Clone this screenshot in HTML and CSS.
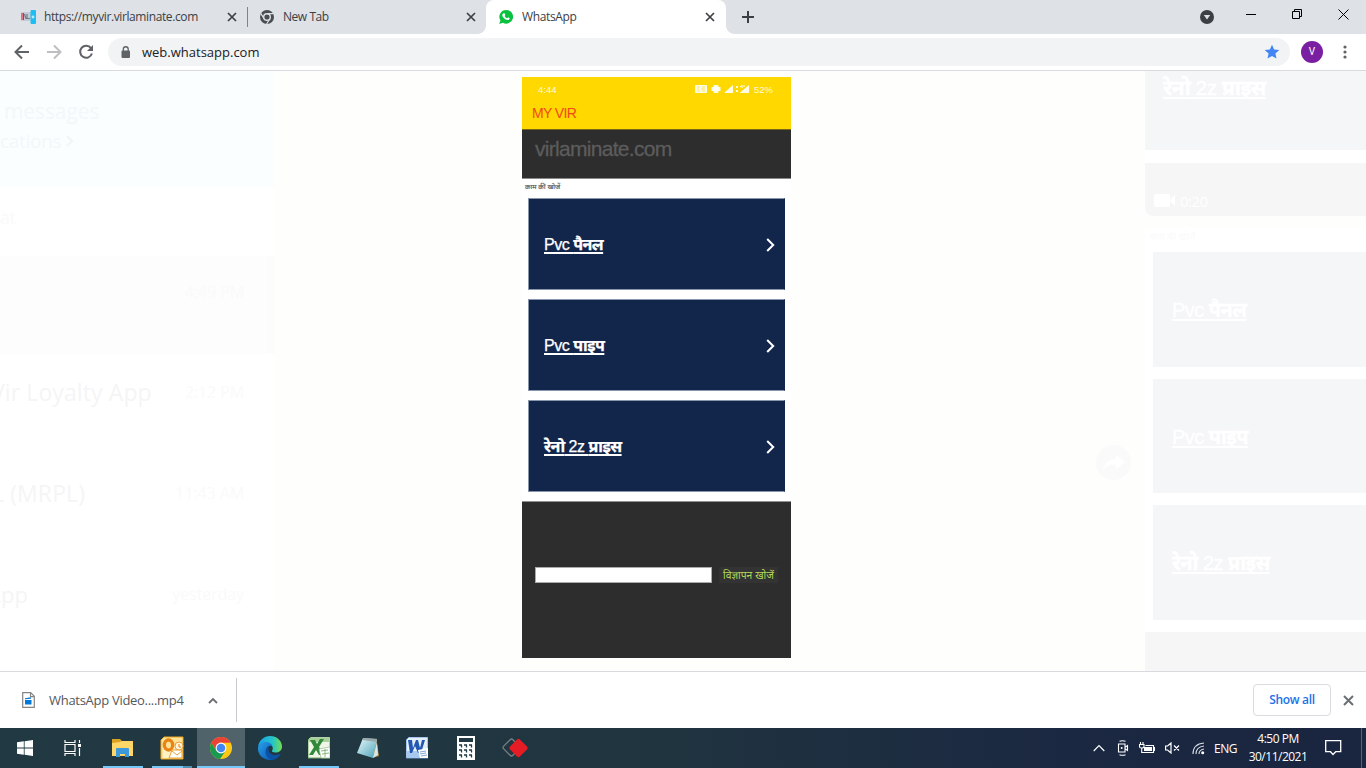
FILE: index.html
```html
<!DOCTYPE html>
<html lang="en">
<head>
<meta charset="utf-8">
<title>WhatsApp</title>
<link rel="stylesheet" href="styles.css">
</head>
<body>
<div class="desktop">
  <header class="tabs">
    <div class="tab first">
      <svg class="fav" width="16" height="16" viewBox="0 0 16 16"><rect y="3" width="10" height="9" fill="#c3cad3"/><path d="M3.500 5l1.500 5M6 5v4.500h3" stroke="#77788a" stroke-width="1.200" fill="none"/><path d="M1 4v7" stroke="#e35867" stroke-width="1.500"/><path d="M2.500 4v7" stroke="#4b5f9c"/><rect x="9.500" y="1" width="5.500" height="14" rx="1" fill="#20bdf2"/><circle cx="12" cy="8" r="1.400" fill="#b5edff"/></svg>
      <span class="label url">https://myvir.virlaminate.com</span>
      <svg class="close" width="10" height="10" viewBox="0 0 10 10"><path d="M1 1l8 8M9 1l-8 8"/></svg>
    </div>
    <div class="tab second">
      <svg class="fav" width="16" height="16" viewBox="0 0 16 16"><circle cx="8" cy="8" r="7" fill="#4a4d51"/><circle cx="8" cy="8" r="3.300" fill="#4a4d51" stroke="#dee1e6" stroke-width="1.400"/><path d="M8 4.700h6.400M5.100 9.700L1.800 4.400M10.900 9.700L7.600 15" stroke="#dee1e6" stroke-width="1.200"/></svg>
      <span class="label newtab">New Tab</span>
      <svg class="close" width="10" height="10" viewBox="0 0 10 10"><path d="M1 1l8 8M9 1l-8 8"/></svg>
    </div>
    <div class="tab active">
      <svg class="fav" width="16" height="16" viewBox="0 0 16 16"><path d="M8.200 1a6.800 6.800 0 1 1-3.300 12.700L1.200 15l1.200-3.600A6.800 6.800 0 0 1 8.200 1z" fill="#0ac23f"/><path d="M5.700 4.200l.9.100.7 1.700-.7.900c.6 1.100 1.400 1.800 2.600 2.300l.9-.9 1.700.9c.1 1-.8 1.800-2 1.800-3 0-5.800-3.200-5.500-5.200.2-.9.800-1.500 1.400-1.600z" fill="#fff"/></svg>
      <span class="label wa">WhatsApp</span>
      <svg class="close" width="10" height="10" viewBox="0 0 10 10"><path d="M1 1l8 8M9 1l-8 8"/></svg>
    </div>
    <svg class="plus" width="12" height="12" viewBox="0 0 12 12"><path d="M6 0v12M0 6h12" stroke="#3c4043" stroke-width="2"/></svg>
    <div class="winctl">
      <svg width="14" height="14" viewBox="0 0 14 14"><circle cx="7" cy="7" r="7" fill="#3c4043"/><path d="M3.800 5h6.400L7 9.600z" fill="#dee1e6"/></svg>
      <svg width="10" height="10" viewBox="0 0 10 10"><path d="M0 4.500h10" stroke="#000"/></svg>
      <svg width="11" height="11" viewBox="0 0 11 11"><path d="M.5 2.500h7v7h-7zM2.500 2.500v-2h7v7h-2" fill="none" stroke="#000"/></svg>
      <svg width="11" height="11" viewBox="0 0 11 11"><path d="M.5.500l10 10M10.500.500l-10 10" stroke="#000"/></svg>
    </div>
  </header>
  <nav class="toolbar">
    <svg class="back" width="16" height="16" viewBox="0 0 16 16"><path d="M15 8H2M8 1.500L1.500 8 8 14.500" fill="none" stroke="#5f6368" stroke-width="2"/></svg>
    <svg class="fwd" width="16" height="16" viewBox="0 0 16 16"><path d="M1 8h13M8 1.500L14.500 8 8 14.500" fill="none" stroke="#bdbfc2" stroke-width="2"/></svg>
    <svg class="reload" width="16" height="16" viewBox="0 0 16 16"><path d="M13 4.200A6 6 0 1 0 13.900 9.500" fill="none" stroke="#5f6368" stroke-width="2"/><path d="M15 1v6H9z" fill="#5f6368"/></svg>
    <div class="omnibox">
      <svg class="lock" width="10" height="13" viewBox="0 0 10 13"><rect x=".5" y="4.500" width="8.500" height="7.500" rx="1" fill="#5f6368"/><path d="M2.300 5V3.200a2.400 2.400 0 0 1 4.900 0V5" fill="none" stroke="#5f6368" stroke-width="1.300"/></svg>
      <span class="address">web.whatsapp.com</span>
      <svg class="star" width="16" height="16" viewBox="0 0 16 16"><path d="M8 .8l2.100 4.700 5.200.5-3.900 3.500 1.100 5.100L8 12l-4.500 2.600 1.100-5.100L.700 6l5.200-.5z" fill="#4285f4"/></svg>
    </div>
    <div class="avatar">V</div>
    <svg class="more" width="4" height="14" viewBox="0 0 4 14"><circle cx="2" cy="2" r="1.600"/><circle cx="2" cy="7" r="1.600"/><circle cx="2" cy="12" r="1.600"/></svg>
  </nav>
  <main class="page">
    <aside class="chats">
      <div class="notice">
        <div class="nt1">messages</div>
        <div class="nt2">cations <svg width="8" height="12" viewBox="0 0 8 12"><path d="M1 1l5 5-5 5" fill="none" stroke="#f3f6f8" stroke-width="2.400"/></svg></div>
      </div>
      <div class="search">at</div>
      <div class="chat selected"><span></span><time>4:49 PM</time></div>
      <div class="chat"><span class="n1">Vir Loyalty App</span><time>2:12 PM</time></div>
      <div class="chat"><span class="n2">L (MRPL)</span><time>11:43 AM</time></div>
      <div class="chat"><span class="n3">App</span><time>yesterday</time></div>
    </aside>
    <section class="viewer">
      <div class="phone">
        <div class="appbar">
          <div class="status"><span>4:44</span>
            <svg width="56" height="10" viewBox="0 0 56 10"><g fill="#fff" fill-opacity=".9"><rect x="1" y="1" width="12" height="8" rx="1"/><path d="M30 9l9-8v8zM45.500 9L55 1v8z"/><rect x="19.500" y="1" width="5" height="8" rx="1"/><path d="M17.500 3h9v4h-9zM42 2h2v2h-2zM42 6h2v2h-2z"/></g><path d="M3 3h3M8 3h3M3 5h2M7 5h4M3 7h3M8 7h3" stroke="#ffd800" stroke-width=".6"/><path d="M46 3l2-2v3M49 2h2" stroke="#fff" fill="none"/></svg>
            <span>52%</span></div>
          <div class="apptitle">MY VIR</div>
        </div>
        <div class="site">virlaminate.com</div>
        <div class="caption">काम की खोजें</div>
        <div class="cards">
          <a class="card"><span>Pvc <b>पैनल</b></span><svg width="9" height="14" viewBox="0 0 9 14"><path d="M1.200 1l6 6-6 6"/></svg></a>
          <a class="card"><span>Pvc <b>पाइप</b></span><svg width="9" height="14" viewBox="0 0 9 14"><path d="M1.200 1l6 6-6 6"/></svg></a>
          <a class="card"><span><b>रेनो</b> 2z <b>प्राइस</b></span><svg width="9" height="14" viewBox="0 0 9 14"><path d="M1.200 1l6 6-6 6"/></svg></a>
        </div>
        <div class="finder"><div class="field"></div><div class="findbtn">विज्ञापन खोजें</div></div>
      </div>
      <div class="forward"><svg width="24" height="18" viewBox="0 0 24 18"><path d="M14 1l9 7-9 7v-4C7 10 4 12 1 17c1-7 5-12 13-12z" fill="#fff"/></svg></div>
    </section>
    <aside class="thumbs">
      <div class="ghost top"><span><b>रेनो</b> 2z <b>प्राइस</b></span></div>
      <div class="duration"><svg width="22" height="14" viewBox="0 0 22 14"><rect y="0" width="16" height="13" rx="2"/><path d="M16 6l5-5v11l-5-5z"/></svg>0:20</div>
      <div class="next">
        <div class="tinycap">काम की खोजें</div>
        <div class="ghost"><span>Pvc <b>पैनल</b></span></div>
        <div class="ghost"><span>Pvc <b>पाइप</b></span></div>
        <div class="ghost"><span><b>रेनो</b> 2z <b>प्राइस</b></span></div>
        <div class="foot"></div>
      </div>
    </aside>
  </main>
  <footer class="downloads">
    <svg class="file" width="13" height="16" viewBox="0 0 13 16"><path d="M.7.700h8l3.600 3.600v11H.700zM8.500.700v4h4" fill="#fff" stroke="#858585" stroke-width="1.200"/><path d="M3 8h6.500v4.500H3zM3 6.300l6-1v1.500L3 7.300z" fill="#0078d7"/></svg>
    <span class="filename">WhatsApp Video....mp4</span>
    <svg class="chev" width="10" height="7" viewBox="0 0 10 7"><path d="M1 6l4-4 4 4" fill="none" stroke="#6b6f73" stroke-width="1.800"/></svg>
    <span class="sep"></span>
    <button class="showall">Show all</button>
    <svg class="dclose" width="11" height="11" viewBox="0 0 11 11"><path d="M1 1l9 9M10 1l-9 9" stroke="#6b6f73" stroke-width="2"/></svg>
  </footer>
  <div class="taskbar">
    <div class="task"><svg width="16" height="16" viewBox="0 0 16 16"><path d="M0 2.300l6.800-1v6.300H0zM7.600 1.200L16 0v7.600H7.600zM0 8.400h6.800v6.300L0 13.800zM7.600 8.400H16V16l-8.400-1.200z" fill="#fff"/></svg></div>
    <div class="task"><svg width="18" height="16" viewBox="0 0 18 16"><path d="M1 0v2.500h10V0M1 16v-2.500h10V16M1 4.500h10v7H1zM15.500 0v3M15.500 8v8" fill="none" stroke="#fff" stroke-width="1.200"/><path d="M14 4h3v3h-3z" fill="#fff"/></svg></div>
    <div class="task open"><svg width="24" height="20" viewBox="0 0 24 20"><path d="M1 1h8l2 2h11v5H1z" fill="#dca11e"/><path d="M1 5l8-1 2-1h11v15H1z" fill="#ffd667"/><path d="M5 19v-8q0-1 1-1h11q1 0 1 1v8h-4v-3H9v3z" fill="#3c99dc"/></svg></div>
    <div class="task open multi"><svg width="24" height="24" viewBox="0 0 24 24"><path d="M4 1h19v22H1V4z" fill="#ffe295" stroke="#eda51d"/><path d="M3 14l18-6v14H3z" fill="#fff2c3"/><ellipse cx="8.500" cy="9" rx="4.200" ry="5" fill="none" stroke="#e88316" stroke-width="3.300"/><path d="M12 14h10v8H9z" fill="#fff" stroke="#e9a13a"/><path d="M12 15l5 4 5-4" fill="none" stroke="#e9a13a"/><circle cx="19" cy="10" r="4" fill="#fff5da" stroke="#eba03d"/><path d="M19 8v3h2" fill="none" stroke="#e88316"/></svg></div>
    <div class="task open current"><svg width="24" height="24" viewBox="0 0 24 24"><circle cx="12" cy="12" r="11" fill="#fbc915"/><path d="M2.300 6.800A11 11 0 0 1 21.700 6.800H12L7.500 14.600z" fill="#ea4335"/><path d="M2.300 6.800A11 11 0 0 0 11 23l5.500-8.300-4.500 2-4.500-2z" fill="#189b50"/><circle cx="12" cy="12" r="5.400" fill="#fff"/><circle cx="12" cy="12" r="4.300" fill="#4285f4"/></svg></div>
    <div class="task"><svg width="24" height="24" viewBox="0 0 24 24"><defs><linearGradient id="edgeTop"><stop stop-color="#199eea"/><stop offset=".6" stop-color="#24c5c9"/><stop offset="1" stop-color="#75dc50"/></linearGradient><linearGradient id="edgeLow" x2="1" y2="1"><stop stop-color="#2ba0e8"/><stop offset="1" stop-color="#0755b5"/></linearGradient></defs><path d="M0 11C1 4 6 0 12 0c7 0 12 5 12 10.500 0 4-3 6-6.500 6-2.500 0-4-.7-3.500-1.700 1-1.300 1-3 .3-4.300C12.500 6 4 5 0 11z" fill="url(#edgeTop)"/><path d="M0 12c1-4 4-6 7.500-6 4 0 6.500 2 7 4.500-2-1.500-5-.5-6 2.500-1.500 5 1.500 9 6.500 11C6 25-.5 19 0 12z" fill="url(#edgeLow)"/><path d="M11.500 9.500c-4 2-5 6-3 10 1.500 2.800 4 4.500 6.500 4.500 3-.8 6-3 7.500-5.500.2-.6-.2-.8-.7-.5C16 21 10 17.500 10.500 13c0-1.500.3-2.500 1-3.500z" fill="#0b52a4"/></svg></div>
    <div class="task open"><svg width="22" height="22" viewBox="0 0 22 22"><path d="M3 0h19v21H0V3z" fill="#eff6e8" stroke="#74aa66"/><path d="M1 1h20v4H1z" fill="#a9cf9a"/><path d="M2 3h5l2 4 3-5h4l-5 8 5 8h-5l-3-5-3 5H1l5-8z" fill="#32883a"/><path d="M11 12l11-2v11H13z" fill="#fff" stroke="#94b98b" stroke-width=".7"/><path d="M13 14l7-1M14 17l7-1M17 12v8" stroke="#88b87d"/></svg></div>
    <div class="task"><svg width="24" height="24" viewBox="0 0 24 24"><defs><linearGradient id="notePaper" x2="1" y2="1"><stop stop-color="#e9f9fb"/><stop offset="1" stop-color="#4aa2b8"/></linearGradient></defs><path d="M20 2l3 18-7 2z" fill="#b58c4b"/><path d="M7 2l14 1-4 19-16-5z" fill="url(#notePaper)"/><path d="M7 2l14 1v3L7 4z" fill="#9ba7a9"/><path d="M17 22l4-16 1 13z" fill="#d8e8e9"/></svg></div>
    <div class="task"><svg width="22" height="22" viewBox="0 0 22 22"><path d="M3 0h19v21H0V3z" fill="#e4effc" stroke="#6c99d7"/><path d="M1 14h20v7H1z" fill="#a8c9ef"/><path d="M2 3h4l1 8 3-8h2l2 8 2-8h3l-4 13h-3L9 9l-3 7H4z" fill="#2258af"/><path d="M12 13l10-2v10h-8z" fill="#fff"/><path d="M14 15l6-1M14 17l6-1M15 19l6-1" stroke="#82a4d5"/></svg></div>
    <div class="task"><svg width="18" height="24" viewBox="0 0 18 24"><path d="M0 0h18v24H0z" fill="#fff"/><path d="M2 2h14v4H2z" fill="#213942"/><path d="M2 9h3M4.500 9v2.500M7 9h3M9.500 9v2.500M12 9h3M14.500 9v2.500M2 14h3M4.500 14v2.500M7 14h3M9.500 14v2.500M12 14h3M14.500 14v2.500M2 19h3M4.500 19v2.500M7 19h3M9.500 19v2.500M12 19h3M14.500 19v2.500" fill="none" stroke="#213942" stroke-width="1.300"/></svg></div>
    <div class="task"><svg width="26" height="20" viewBox="0 0 26 20"><rect x="3" y="3" width="13" height="13" rx="2" transform="rotate(45 9.500 9.500)" fill="none" stroke="#777f83" stroke-width="1.300"/><rect x="9.500" y="3" width="14" height="14" rx="2" transform="rotate(45 16.500 10)" fill="#e51c25"/></svg></div>
    <div class="tray">
      <svg width="12" height="8" viewBox="0 0 12 8"><path d="M.7 7L6 1.700 11.300 7" fill="none" stroke="#fff" stroke-width="1.200"/></svg>
      <svg width="12" height="16" viewBox="0 0 12 16"><path d="M2.500 1.300q3-1.200 6 0M2.500 14.700q3 1.200 6 0M1.500 4h6.500v8h-6.500zM8.500 7l2-1.500v5l-2-1.500" fill="none" stroke="#fff" stroke-width="1.100"/><circle cx="4.700" cy="8" r="1" fill="#fff"/></svg>
      <svg width="16" height="12" viewBox="0 0 16 12"><path d="M1.500 0v2.500M4 0v2.500M.500 2.500h4.500v2Q5 6 2.700 6T.500 4.500zM2.700 6v4.500h11.800v-7H6.500" fill="none" stroke="#fff" stroke-width="1.100"/><path d="M5 5h8v4H5zM15 5h1v4h-1z" fill="#fff"/></svg>
      <svg width="15" height="12" viewBox="0 0 15 12"><path d="M.6 4h2L6 1v10L2.600 8h-2zM9 3.500l5 5M14 3.500l-5 5" fill="none" stroke="#fff" stroke-width="1.200"/></svg>
      <svg width="13" height="13" viewBox="0 0 13 13"><path d="M1 12Q1 2 12 1M4 12q0-7 8-8M7 12q0-4 5-5" fill="none" stroke="#dce1e8" stroke-width="1.100"/><circle cx="10.700" cy="10.700" r="1.500" fill="#fff"/></svg>
      <span class="lang">ENG</span>
      <span class="clock"><span>4:50 PM</span><span class="date">30/11/2021</span></span>
      <svg width="17" height="16" viewBox="0 0 17 16"><path d="M.7.700h15v11h-5L8 14.500l-2.500-2.800H.700z" fill="none" stroke="#fff" stroke-width="1.300"/></svg>
      <i class="peek"></i>
    </div>
  </div>
</div>
</body>
</html>
```

FILE: styles.css
```css
* { box-sizing: border-box; }
body { margin: 0; font-family: "Open Sans", "Noto Sans", sans-serif; font-size: 12px; }
svg { display: block; flex: none; }
.desktop { width: 1366px; height: 768px; overflow: hidden; display: flex; flex-direction: column; background: #fff; }

/* tab strip */
.tabs { height: 34px; flex: none; background: #dee1e6; display: flex; align-items: center; color: #3c4043; }
.tab { height: 34px; display: flex; align-items: center; white-space: nowrap; }
.tab .close { margin-left: auto; }
.close path { stroke: #3c4043; stroke-width: 1.7; }
.first { width: 248px; padding: 0 11px 0 21px; background: linear-gradient(#808489, #808489) right center / 1px 20px no-repeat; }
.second { width: 238px; padding: 0 10px 0 11px; }
.active { width: 240px; padding: 0 11px 0 12px; background: #fff; border-radius: 8px 8px 0 0; position: relative; }
.active::before, .active::after { content: ""; position: absolute; bottom: 0; width: 8px; height: 8px; }
.active::before { left: -8px; background: radial-gradient(circle at 0 0, transparent 7.5px, #fff 8px); }
.active::after { right: -8px; background: radial-gradient(circle at 100% 0, transparent 7.5px, #fff 8px); }
.label { margin-left: 7px; line-height: 16px; }
.url { letter-spacing: -.39px; }
.newtab { margin-left: 8px; letter-spacing: -.45px; }
.wa { margin-left: 8px; letter-spacing: -.35px; }
.plus { margin-left: 16px; }
.winctl { margin-left: auto; display: flex; align-items: center; padding-right: 17px; height: 34px; }
.winctl svg + svg { margin: 0 0 5px 32px; }
.winctl svg:nth-child(3) { margin-left: 36px; }
.winctl svg:nth-child(4) { margin-left: 35px; }

/* navigation bar */
.toolbar { height: 37px; flex: none; border-bottom: 1px solid #d9dadd; display: flex; align-items: center; padding-left: 14px; }
.fwd { margin-left: 16px; }
.reload { margin-left: 16px; }
.omnibox { margin-left: 14px; width: 1182px; height: 28px; border-radius: 14px; background: #f1f3f4; display: flex; align-items: center; padding: 0 10px 0 13px; }
.address { margin-left: 11px; font-size: 13px; letter-spacing: 0; color: #202124; }
.star { margin-left: auto; }
.avatar { margin-left: 11px; width: 22px; height: 22px; border-radius: 50%; background: #7b1fa2; color: #fff; font: 10px/22px Roboto, sans-serif; text-align: center; }
.more { margin-left: 20px; fill: #5f6368; }

/* page */
.page { height: 600px; flex: none; display: grid; grid-template-columns: 274px 871px 221px; overflow: hidden; }
.chats { overflow: hidden; color: #f5f5f6; font-size: 22px; letter-spacing: .1px; }
.notice { height: 116px; background: #fafeff; color: #f4f7f9; padding: 25px 0 0 4px; line-height: 30px; font-size: 21px; letter-spacing: -.1px; }
.nt2 { display: flex; align-items: center; gap: 5px; margin-left: -4px; font-size: 19px; letter-spacing: -.3px; }
.search { height: 69px; padding-top: 18px; font-size: 18px; letter-spacing: -.4px; color: #fafafa; }
.chat { height: 101px; display: flex; justify-content: space-between; padding: 22px 30px 0 0; line-height: 32px; white-space: nowrap; }
.chat.selected { height: 98px; padding-top: 20px; background: linear-gradient(90deg, #fdfdfd 266px, #fcfcfc 266px); }
.chat time { font-size: 16px; letter-spacing: -.1px; color: #fafafa; }
.n1 { margin-left: -9px; font-size: 23px; }
.n2 { margin-left: -8px; font-size: 23px; }
.n3 { margin-left: -13px; }
.viewer { background: #fefefc; display: flex; padding: 6px 0 0 248px; }
.phone { width: 269px; height: 581px; background: #fff; display: flex; flex-direction: column; font-family: "Liberation Sans", "Noto Sans Devanagari", sans-serif; }
.appbar { height: 52px; flex: none; background: #ffd800; }
.status { height: 24px; display: flex; align-items: center; padding: 0 18px 0 16px; color: rgba(255,255,255,.88); font-size: 9.5px; }
.status svg { margin: 0 4px 0 auto; }
.apptitle { margin-left: 10px; line-height: 25px; font-size: 14px; letter-spacing: -.6px; color: #f4471a; }
.site { height: 50px; flex: none; background: #2d2d2d; border-top: 1px solid #776719; border-bottom: 1px solid #898989; padding: 5px 0 0 13px; font-size: 21px; line-height: 28px; letter-spacing: -.7px; color: #5c5c5c; -webkit-text-stroke: .3px #5c5c5c; }
.caption { height: 19px; padding: 1px 0 0 3px; font-size: 7px; line-height: 14px; color: #555; -webkit-text-stroke: .2px #666; white-space: nowrap; }
.cards { display: grid; gap: 9px; padding: 0 6px; }
.card { height: 92px; background: #12254b; border: 1px solid #8995ab; border-right-color: #12254b; display: flex; align-items: center; justify-content: space-between; padding: 2px 9px 0 15px; color: #fff; font-size: 16px; letter-spacing: -.5px; -webkit-text-stroke: .25px #fff; }
.card span { padding-top: 3px; text-decoration: underline; text-decoration-thickness: 1.5px; text-underline-offset: 2px; text-decoration-skip-ink: none; }
.card path { fill: none; stroke: #fff; stroke-width: 2; }
.finder { height: 157px; margin-top: auto; background: #2d2d2d; border-top: 1px solid #929292; display: flex; align-items: flex-start; padding: 65px 13px 0; gap: 7px; }
.field { width: 177px; height: 16px; background: #fff; border: 1px solid #aaa; }
.findbtn { width: 59px; height: 16px; background: #333; color: #b5d957; font-size: 10.3px; line-height: 17px; text-align: center; white-space: nowrap; }
.forward { margin: 368px 0 0 305px; width: 35px; height: 35px; border-radius: 50%; background: #fafafb; display: grid; place-items: center; }
.thumbs { background: #fefefc; font-family: "Liberation Sans", "Noto Sans Devanagari", sans-serif; overflow: hidden; }
.ghost { height: 114.5px; margin: 0 0 12px 8px; background: #f5f6f8; color: #fff; padding: 43px 0 0 19px; font-size: 20px; line-height: 30px; letter-spacing: -.55px; -webkit-text-stroke: .4px #fff; }
.ghost span { text-decoration: underline; text-decoration-thickness: 2px; text-underline-offset: 2px; text-decoration-skip-ink: none; }
.ghost.top { height: 79px; margin: 0; padding: 2px 0 0 18px; font-size: 21px; }
.duration { height: 66px; border-top: 13px solid #fff; border-radius: 0 0 0 8px; background: #f6f6f6; display: flex; align-items: flex-end; padding: 0 0 5px 9px; color: #fff; font: 15px/20px "Open Sans", sans-serif; letter-spacing: -.5px; gap: 4px; }
.duration svg { fill: #fff; margin-bottom: 3px; }
.next { margin-top: 11px; background: #fff; }
.tinycap { height: 25px; padding-left: 5px; font-size: 9px; line-height: 20px; color: #fafafa; }
.foot { height: 60px; background: #f6f6f6; }

/* download shelf */
.downloads { height: 57px; flex: none; border-top: 1px solid #d9dadd; display: flex; align-items: center; padding-left: 22px; }
.filename { margin-left: 14px; width: 136px; font-size: 13px; letter-spacing: -.29px; color: #55585c; white-space: nowrap; }
.chev { margin-left: 23px; }
.sep { margin-left: 18px; width: 1px; height: 44px; background: #c8c9cc; }
.showall { margin-left: auto; width: 78px; height: 32px; padding: 0 0 2px; background: #fff; border: 1px solid #dadce0; border-radius: 4px; color: #1a73e8; font: 600 12px "Open Sans", sans-serif; letter-spacing: -.3px; }
.dclose { margin: 0 12px; }

/* taskbar */
.taskbar { height: 40px; flex: none; display: flex; background: linear-gradient(90deg, #213942, #20353f 45%, #1b2841 78%, #1a2540); }
.task { width: 49px; height: 40px; display: grid; place-items: center; }
.task:nth-child(2) { width: 48px; }
.task:nth-child(n+3) { transform: translateX(1px); }
.open { background: linear-gradient(#76c8f8, #76c8f8) center bottom / 40px 2px no-repeat; }
.multi { background: linear-gradient(90deg, #76c8f8 31px, #5290b2 31px) center bottom / 40px 2px no-repeat; }
.current { width: 49px; background: linear-gradient(#76c8f8, #76c8f8) center bottom / 48px 2px no-repeat, linear-gradient(#50636b, #50636b) center / 48px 40px no-repeat; }
.tray { margin-left: auto; display: flex; align-items: center; color: #fff; }
.tray > svg { margin-right: 10px; }
.tray > svg:first-child { margin-right: 12px; }
.tray > svg:nth-child(4) { margin-right: 12px; }
.tray > svg:nth-child(5) { margin-right: 9px; }
.lang { width: 24px; letter-spacing: -.5px; }
.clock { width: 64px; margin: 0 15px 0 8px; display: flex; flex-direction: column; align-items: center; line-height: 18px; letter-spacing: -.5px; }
.peek { width: 1px; height: 40px; margin-left: 9px; margin-right: 4px; background: #58627a; }
```
